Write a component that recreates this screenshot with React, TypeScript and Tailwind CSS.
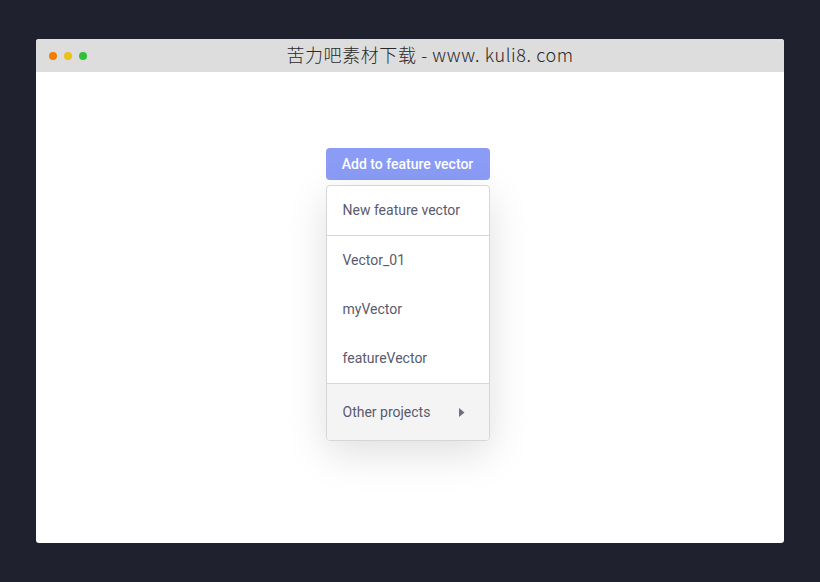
export default function App() {
  const items = ["Vector_01", "myVector", "featureVector"];
  return (
    <div className="w-[820px] h-[582px] bg-[#1f212e] pt-[39px] pl-[36px]" style={{ fontFamily: "Roboto, 'Liberation Sans', sans-serif" }}>
      <div className="w-[748px] h-[504px] bg-white rounded-[3px] overflow-hidden flex flex-col">
        <div className="h-[33px] bg-[#dddddd] flex items-center relative shrink-0">
          <div className="flex items-center gap-[7px] pl-[13px]">
            <span className="w-[8px] h-[8px] rounded-full bg-[#f57c00]" />
            <span className="w-[8px] h-[8px] rounded-full bg-[#e9c21b]" />
            <span className="w-[8px] h-[8px] rounded-full bg-[#2fc13a]" />
          </div>
          <div className="absolute inset-0 flex items-center justify-center pl-[40px] pb-[2px] text-[18px] text-[#2a2a2a] font-light tracking-[0.6px]" style={{ fontFamily: "'Noto Sans CJK SC', 'Noto Sans', sans-serif" }}>
            苦力吧素材下载 - www. kuli8. com
          </div>
        </div>
        <div className="flex-1 flex justify-center pt-[76px] pr-[5px]">
          <div className="w-[164px] flex flex-col">
            <button className="h-[32px] rounded-[4px] bg-[#8a9cf6] text-white text-[14px] font-medium">
              Add to feature vector
            </button>
            <div className="mt-[5px] border border-[#d6d6d9] rounded-[4px] bg-white shadow-[0_12px_40px_rgba(0,0,0,0.13)] overflow-hidden text-[14px] text-[#5a5a6e]">
              <div className="h-[49px] flex items-center pl-[16px]">New feature vector</div>
              <div className="border-t border-[#d6d6d9]">
                {items.map((t) => (
                  <div key={t} className="h-[49px] flex items-center pl-[16px]">{t}</div>
                ))}
              </div>
              <div className="border-t border-[#d6d6d9] bg-[#f4f4f5] h-[57px] flex items-center pl-[16px] pr-[24px] justify-between">
                <span>Other projects</span>
                <svg width="6" height="9" viewBox="0 0 6 9"><path d="M0 0 L5.5 4.5 L0 9 Z" fill="#6e6e7e" /></svg>
              </div>
            </div>
          </div>
        </div>
      </div>
    </div>
  );
}
